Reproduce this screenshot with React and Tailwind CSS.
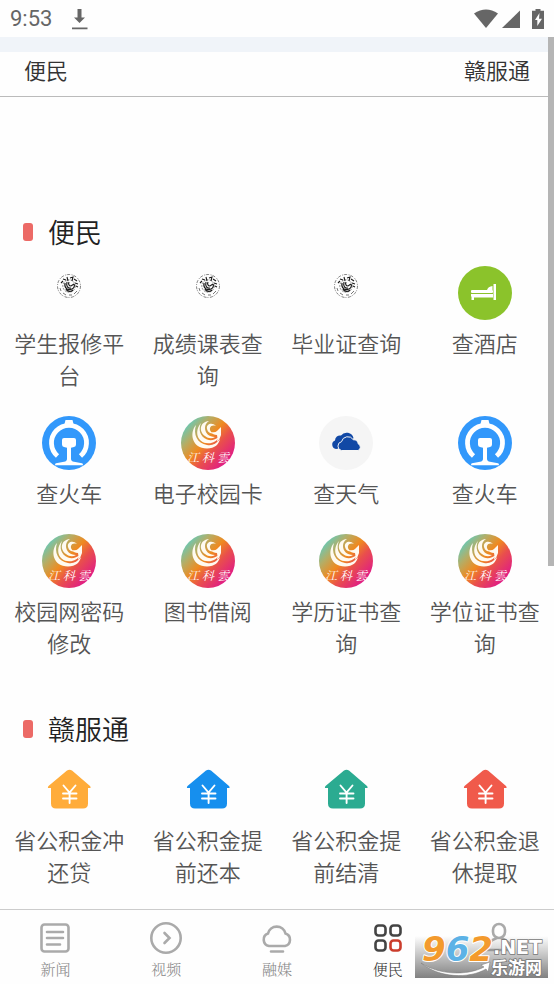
import React, { useId, useState } from "react";

const SealIcon = () => (
  <svg viewBox="0 0 54 54" className="size-[54px]" fill="none" stroke="#1c1c1c">
    <circle cx="27" cy="20" r="11.5" strokeWidth="0.7" strokeDasharray="3 1.5 1 1" strokeOpacity="0.8" />
    <path d="M19 17l2-2M21 13l3 1M25 11l1 4M28 12l3-1-1 4M32 13l3 2M33 17l3 1M34 20l2 1" strokeWidth="1.1" />
    <path d="M18 22l1 3M21 27l3 2M27 29h3M32 28l3-3" strokeWidth="0.6" />
    <circle cx="27" cy="20" r="6.2" strokeWidth="0.5" strokeDasharray="2 1" />
    <path d="M23 17c-1 5 3 8 7 6 2-1 3-3 2-5M25 16c-1 4 1 7 4 6M27 16c-1 2 0 4 2 4l3-2" strokeWidth="1.2" />
    <path d="M24 23c2 3 5 3 7 1" strokeWidth="1.4" />
  </svg>
);

const HotelIcon = () => (
  <svg viewBox="0 0 54 54" className="size-[54px]">
    <circle cx="27" cy="27" r="27" fill="#8bc32b" />
    <g fill="#fff">
      <rect x="13" y="24" width="22" height="3" rx="1" />
      <path d="M13 28h22v3.500H16V34h-2.500v-3L13 30z" />
      <path d="M35.500 18H38v16h-2.500z" />
      <path d="M29 24q1-3.500 5.500-4v4z" />
    </g>
  </svg>
);

const TrainIcon = () => (
  <svg viewBox="0 0 54 54" className="size-[54px]">
    <circle cx="27" cy="27" r="27" fill="#3298fb" />
    <path d="M15.500 40A17.500 17.500 0 1 1 38.500 40" fill="none" stroke="#fff" strokeWidth="4.800" />
    <path d="M22.500 8l1-4h7l1 4z" fill="#fff" />
    <path
      d="M22 22h10q2 0 2 2v4.500q0 2-2 2.500l-3 .7v11q0 2.500 3 3l8 1.500q1 .2 1 2H13q0-1.800 1-2l8-1.500q3-.5 3-3v-11l-3-.7q-2-.5-2-2.500V24q0-2 2-2z"
      fill="#fff"
    />
  </svg>
);

const CampusIcon = () => {
  const id = useId();
  return (
    <svg viewBox="0 0 54 54" className="size-[54px]">
      <defs>
        <linearGradient id={id} x1="0.1" y1="0.15" x2="0.88" y2="0.88">
          <stop offset="0" stopColor="#68c9b6" />
          <stop offset="0.22" stopColor="#b5ad65" />
          <stop offset="0.45" stopColor="#ef8a20" />
          <stop offset="0.65" stopColor="#e94f4c" />
          <stop offset="1" stopColor="#df168c" />
        </linearGradient>
      </defs>
      <circle cx="27" cy="27" r="27" fill={`url(#${id})`} />
      <g fill="#fffaf0">
        <path d="M15 9C8 17 11 32.500 26 32.500 34 32.500 38 28 39 23 35 28 31 30 26 29 16 27.500 12 18 15 9z" />
        <path d="M20 7C13 15 16 27 27 27.300 32 27.500 36 25 38 21 34 24 30 25 26 23.500 19 20.500 17 14 20 7z" />
        <path d="M28 5C18 6 18 16 24 20 27 22.500 31 23 34 21 28 21 24 17 24 12 24 9 25 7 28 5z" />
        <path d="M35 10C31 6 25 8 26 13 27 17 30 18 33 17.500 30 17 28.500 14 29 12 30 9.500 32 9 35 10z" />
        <path d="M30 16q4 1 6-1l4-4v8q-1 4-4 7 1-4 0-7-4 0-6-3z" />
      </g>
      <text
        x="27"
        y="46"
        textAnchor="middle"
        fill="#fff"
        className="font-['Noto_Serif_CJK_SC','Noto_Sans_CJK_SC',serif] text-[12px] font-normal italic"
      >
        江 科 雲
      </text>
    </svg>
  );
};

const WeatherIcon = () => (
  <svg viewBox="0 0 54 54" className="size-[54px]">
    <circle cx="27" cy="27" r="27" fill="#f5f5f5" />
    <path
      d="M17 33a4.500 4.500 0 0 1-1-8.600 5 5 0 0 1 6-4.800 7 7 0 0 1 12.500 2.400l-6 9z"
      fill="#1148a5"
    />
    <path
      d="M22.500 34.500a4.500 4.500 0 0 1 0-8.800 6.500 6.500 0 0 1 11.800-2 5 5 0 0 1 5 4.300 3.500 3.500 0 0 1-.3 6.500z"
      fill="#1148a5"
      stroke="#f5f5f5"
    />
  </svg>
);

const HouseIcon = ({ color }) => (
  <svg viewBox="0 0 54 54" className="size-[54px]">
    <path
      d="M25 7.600q2.500-1.600 5 0L48 23q1.500 2-.5 2H46v15.500q0 5-5 5H14q-5 0-5-5V25H7q-2 0-.5-2z"
      fill={color}
    />
    <path
      d="M21.500 22.500l6 7 6-7M21 30.500h13.500M21 35.500h13.500M27.600 30v10"
      fill="none"
      stroke="#fff"
      strokeWidth="1.900"
      strokeLinecap="round"
    />
  </svg>
);

const sections = [
  {
    title: "便民",
    items: [
      { label: "学生报修平台", icon: <SealIcon /> },
      { label: "成绩课表查询", icon: <SealIcon /> },
      { label: "毕业证查询", icon: <SealIcon /> },
      { label: "查酒店", icon: <HotelIcon /> },
      { label: "查火车", icon: <TrainIcon /> },
      { label: "电子校园卡", icon: <CampusIcon /> },
      { label: "查天气", icon: <WeatherIcon /> },
      { label: "查火车", icon: <TrainIcon /> },
      { label: "校园网密码修改", icon: <CampusIcon /> },
      { label: "图书借阅", icon: <CampusIcon /> },
      { label: "学历证书查询", icon: <CampusIcon /> },
      { label: "学位证书查询", icon: <CampusIcon /> },
    ],
  },
  {
    title: "赣服通",
    items: [
      { label: "省公积金冲还贷", icon: <HouseIcon color="#ffac3a" /> },
      { label: "省公积金提前还本", icon: <HouseIcon color="#168fee" /> },
      { label: "省公积金提前结清", icon: <HouseIcon color="#2bab91" /> },
      { label: "省公积金退休提取", icon: <HouseIcon color="#f05a4b" /> },
    ],
  },
];

const tabs = [
  {
    name: "news",
    label: "新闻",
    icon: (
      <>
        <rect x="3.500" y="3.500" width="27" height="27" rx="3" />
        <path d="M9 11h16M9 17h16M9 23.500h13" />
      </>
    ),
  },
  {
    name: "video",
    label: "视频",
    icon: (
      <>
        <circle cx="17" cy="17" r="14.700" />
        <path d="M15.500 12l5 5-5 5" />
      </>
    ),
  },
  {
    name: "media",
    label: "融媒",
    icon: (
      <path d="M9 25a6.500 6.500 0 0 1-1-12.500 9 9 0 0 1 17.500 0A6.500 6.500 0 0 1 25 25zM11 30.500h12" />
    ),
  },
  {
    name: "service",
    label: "便民",
    icon: (
      <>
        <rect x="4.500" y="4.500" width="10" height="10" rx="3" />
        <rect x="19.500" y="4.500" width="10" height="10" rx="3" />
        <rect x="4.500" y="19.500" width="10" height="10" rx="3" />
        <rect x="19.500" y="19.500" width="10" height="10" rx="3" stroke="#cb3d2c" />
      </>
    ),
  },
  {
    name: "profile",
    icon: (
      <>
        <rect x="11" y="3" width="12" height="14" rx="6" />
        <path d="M15 17c-6 2-10 5-11 12h26c-1-7-5-10-11-12" />
      </>
    ),
  },
];

const StatusBar = () => (
  <div className="flex h-[37px] items-center justify-between px-[10px] text-[#666]">
    <div className="flex items-center gap-5">
      <span className="font-['Roboto',sans-serif] text-[22px] leading-8 font-normal">9:53</span>
      <svg viewBox="0 0 16 22" className="h-[22px] w-4" fill="currentColor">
        <path d="M5.500 1h4v8.500H13L7.500 15 2 9.500h3.500zM0 19.500h15.500v1.700H0z" />
      </svg>
    </div>
    <div className="flex items-center">
      <svg viewBox="0 0 24 20" className="h-5 w-6" fill="currentColor">
        <path d="M0 4.500Q12-3.500 24 4.500L12 19z" />
      </svg>
      <svg viewBox="0 0 18 20" className="ml-1 h-5 w-[18px]" fill="currentColor">
        <path d="M18 1.500V19H0z" />
      </svg>
      <svg viewBox="0 0 12 20" className="ml-3 h-5 w-3" fill="currentColor">
        <path fillRule="evenodd" d="M3.500 0h5v1.800H12V20H0V1.800h3.500zM7.500 4L3 11h2.300v6L10 9.800H7z" />
      </svg>
    </div>
  </div>
);

const Watermark = () => (
  <div className="pointer-events-none absolute right-[6px] bottom-[6px] h-[42px] w-[133px] bg-linear-to-b from-transparent to-[#737373]/90">
    <svg
      viewBox="0 0 133 42"
      className="h-full w-full overflow-visible font-['DejaVu_Sans','Noto_Sans_CJK_SC',sans-serif] font-bold"
    >
      <path d="M6 27C24 39 52 40 69 31l-3-2 9-3-2 10-2-3C54 43 24 42 6 27z" fill="#fff" stroke="#777" strokeWidth="0.500" />
      <g className="text-[34px] italic" stroke="#fff" strokeWidth="2" paintOrder="stroke" strokeLinejoin="round">
        <text x="7" y="25">
          <tspan fill="#f39a2d">9</tspan>
          <tspan fill="#5cb2e6">6</tspan>
          <tspan fill="#f39a2d">2</tspan>
        </text>
      </g>
      <g fill="#fff" stroke="#777" strokeWidth="1.500" paintOrder="stroke">
        <text x="78" y="18" className="text-[19px]">.NET</text>
        <text x="76" y="38" className="text-[17px]">乐游网</text>
      </g>
    </svg>
  </div>
);

const App = () => {
  const [active, setActive] = useState("service");

  return (
    <div className="relative flex min-h-screen flex-col bg-[#fefefe] font-['Noto_Sans_CJK_SC',sans-serif] font-[350]">
      <StatusBar />
      <main className="relative flex-1">
        <div className="h-[15px] bg-[#f0f4f9]" />
        <header className="flex h-[45px] items-center justify-between border-b border-[#bbb] px-6 pb-[10px] text-[22px] leading-8 text-[#333]">
          <a href="#service-0">便民</a>
          <a href="#service-1">赣服通</a>
        </header>
        <div className="flex flex-col gap-[51px] pt-[115px] pb-5">
          {sections.map((section, index) => (
            <section key={section.title} id={`service-${index}`}>
              <h2 className="flex h-10 items-center gap-[15px] pl-[23px] text-[27px] leading-10 text-[#222]">
                <span className="h-[18px] w-[10px] rounded-[3px] bg-[#ec6a66]" />
                {section.title}
              </h2>
              <div className="mt-[14px] grid grid-cols-4 gap-y-[26px]">
                {section.items.map((item, i) => (
                  <a key={i} href="#" className="flex flex-col items-center gap-[6px] px-3">
                    {item.icon}
                    <span className="text-center text-[22px] leading-8 text-[#555]">
                      {item.label}
                    </span>
                  </a>
                ))}
              </div>
            </section>
          ))}
        </div>
        <div className="absolute top-0 right-0 h-[529px] w-[6px] bg-[#b5b5b5]" />
      </main>
      <nav className="grid h-[75px] grid-cols-5 border-t border-[#ccc]">
        {tabs.map((tab) => (
          <button
            key={tab.name}
            aria-label={tab.name}
            onClick={() => setActive(tab.name)}
            className={
              active === tab.name
                ? "flex flex-col items-center gap-1 pt-[11px] text-[#444]"
                : "flex flex-col items-center gap-1 pt-[11px] text-[#aaa]"
            }
          >
            <svg
              viewBox="0 0 34 34"
              className="size-[34px]"
              fill="none"
              stroke="currentColor"
              strokeWidth="2.600"
              strokeLinecap="round"
            >
              {tab.icon}
            </svg>
            {tab.label && (
              <span
                className={
                  active === tab.name
                    ? "font-['Noto_Serif_CJK_SC','Noto_Sans_CJK_SC',serif] text-[15px] leading-5 text-[#333]"
                    : "font-['Noto_Serif_CJK_SC','Noto_Sans_CJK_SC',serif] text-[15px] leading-5 text-[#888]"
                }
              >
                {tab.label}
              </span>
            )}
          </button>
        ))}
      </nav>
      <Watermark />
    </div>
  );
};

export default App;
